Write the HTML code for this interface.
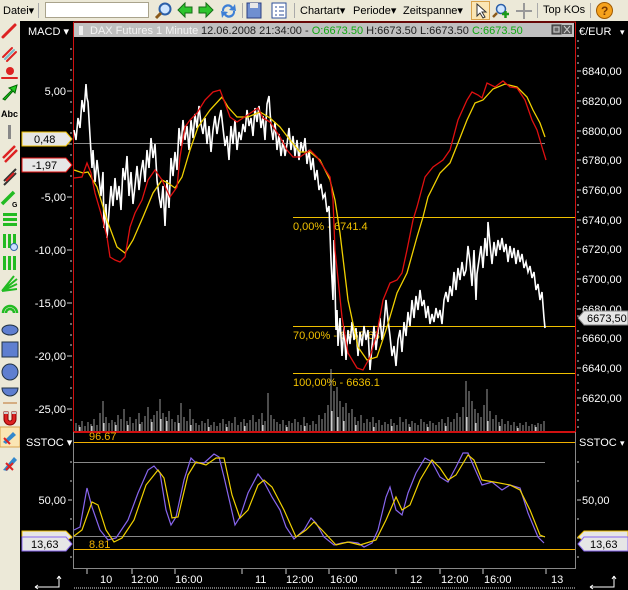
<!DOCTYPE html>
<html><head><meta charset="utf-8"><style>
*{margin:0;padding:0;box-sizing:border-box}
body{width:628px;height:590px;overflow:hidden;background:#000;font-family:"Liberation Sans",sans-serif;position:relative}
.tb{position:absolute;left:0;top:0;width:628px;height:21px;background:#ECE9D8;font-size:11px;color:#000}
.tb span{position:absolute;top:4px}
.lc{position:absolute;left:0;top:21px;width:20px;height:569px;background:#ECE9D8}
.w{position:absolute;color:#fff;font-size:11px;white-space:nowrap}
.r{text-align:right}
</style></head><body>
<div class="tb">
<span style="left:3px">Datei▾</span>
<div style="position:absolute;left:38px;top:3px;width:1px;height:15px;background:#aaa"></div>
<div style="position:absolute;left:45px;top:2px;width:104px;height:16px;background:#fff;border:1px solid #a9a38c"></div>
<svg style="position:absolute;left:153px;top:1px" width="20" height="19"><circle cx="12" cy="8" r="5.5" fill="#cfe6ff" stroke="#2b5fa8" stroke-width="2"/><line x1="8" y1="12" x2="3" y2="17" stroke="#8a5a1a" stroke-width="3"/></svg>
<svg style="position:absolute;left:177px;top:2px" width="65" height="18"><path d="M1 8 L8 1 L8 5 L15 5 L15 11 L8 11 L8 15Z" fill="#2ec52e" stroke="#176d17"/><path d="M36 8 L29 1 L29 5 L22 5 L22 11 L29 11 L29 15Z" fill="#2ec52e" stroke="#176d17"/><path d="M45 9 A6 6 0 0 1 56 5 L58 2 L59 9 L52 8 L54 6 A4 4 0 0 0 47 9Z" fill="#3d7fd6"/><path d="M58 9 A6 6 0 0 1 47 13 L45 16 L44 9 L51 10 L49 12 A4 4 0 0 0 56 9Z" fill="#3d7fd6"/></svg>
<div style="position:absolute;left:242px;top:3px;width:1px;height:15px;background:#aaa"></div>
<svg style="position:absolute;left:246px;top:2px" width="42" height="17"><rect x="1" y="1" width="14" height="15" fill="#6f8fd0" stroke="#2c3f80"/><rect x="4" y="1" width="8" height="5" fill="#e8e8e8"/><rect x="26" y="1" width="14" height="15" fill="#fff" stroke="#2c4f9a"/><path d="M29 5h2M33 5h5M29 9h2M33 9h5M29 13h2M33 13h5" stroke="#2c4f9a"/></svg>
<div style="position:absolute;left:294px;top:3px;width:1px;height:15px;background:#aaa"></div>
<span style="left:300px">Chartart▾</span><span style="left:353px">Periode▾</span><span style="left:403px">Zeitspanne▾</span>
<div style="position:absolute;left:471px;top:1px;width:19px;height:19px;background:#fbe6b4;border:1px solid #d9a34c"></div>
<svg style="position:absolute;left:473px;top:2px" width="60" height="18"><path d="M4 2 L4 14 L7 11 L10 16 L12 15 L9 10 L13 10Z" fill="#fff" stroke="#333"/><circle cx="28" cy="7" r="4.5" fill="#cfe6ff" stroke="#2b5fa8" stroke-width="1.5"/><path d="M24 11 L20 15" stroke="#8a5a1a" stroke-width="2.5"/><path d="M29 12h7M32.5 9v7" stroke="#1a9a1a" stroke-width="2.5"/><path d="M51 1v16M43 9h16" stroke="#999" stroke-width="2"/></svg>
<div style="position:absolute;left:537px;top:3px;width:1px;height:15px;background:#aaa"></div>
<span style="left:543px">Top KOs</span>
<div style="position:absolute;left:590px;top:3px;width:1px;height:15px;background:#aaa"></div>
<svg style="position:absolute;left:595px;top:1px" width="19" height="19"><circle cx="9.5" cy="9.5" r="8" fill="#f6a21c" stroke="#a05a00"/><text x="6" y="14" font-size="12" font-weight="bold" fill="#7a3a00" font-family="Liberation Sans">?</text></svg>
</div>
<div class="lc">
<svg width="20" height="569" style="position:absolute;left:0;top:0">
<g stroke-linecap="round">
<path d="M3 16 L15 4" stroke="#d22" stroke-width="3"/>
<path d="M3 36 L12 27M7 40 L16 31" stroke="#d22" stroke-width="2"/><path d="M5 38 L14 29" stroke="#7bc" stroke-width="2"/>
<circle cx="10" cy="50" r="4" fill="#d22"/><path d="M2 57h15" stroke="#d22" stroke-width="2"/>
<path d="M3 78 L12 69 L9 67 L17 64 L15 72 L13 70 L5 79Z" fill="#2c2" stroke="#060"/>
</g>
<text x="1" y="96" font-size="9" font-weight="bold" font-family="Liberation Sans" fill="#000">Abc</text>
<rect x="8" y="104" width="3" height="14" fill="#888"/>
<path d="M3 137 L15 125M5 141 L17 129" stroke="#d22" stroke-width="2.5"/>
<path d="M4 160 L16 148M4 164 L16 152" stroke="#333" stroke-width="2"/><path d="M6 160 L14 152" stroke="#d22" stroke-width="2"/>
<path d="M2 183 L14 171" stroke="#2b2" stroke-width="3.5"/><text x="12" y="186" font-size="7" font-weight="bold" fill="#000">G</text>
<g fill="#2b2"><rect x="3" y="192" width="14" height="3"/><rect x="3" y="197" width="14" height="3"/><rect x="3" y="202" width="14" height="3"/>
<rect x="3" y="213" width="3" height="14"/><rect x="8" y="213" width="3" height="14"/><rect x="13" y="213" width="3" height="12"/>
<rect x="3" y="235" width="3" height="14"/><rect x="8" y="235" width="3" height="14"/><rect x="13" y="235" width="3" height="14"/></g>
<circle cx="14" cy="226" r="3.5" fill="#cdf" stroke="#36a"/>
<path d="M2 270 L17 258M2 270 L17 263M2 270 L17 268M2 270 L14 255" stroke="#2b2" stroke-width="2"/>
<path d="M3 292 A7 7 0 0 1 17 292M6 292 A4 4 0 0 1 14 292" stroke="#2b2" stroke-width="2.5" fill="none"/>
<ellipse cx="10" cy="309" rx="8" ry="5" fill="#5f7fd0" stroke="#234"/>
<rect x="2" y="321" width="16" height="15" fill="#5f7fd0" stroke="#234"/>
<circle cx="10" cy="351" r="8" fill="#5f7fd0" stroke="#234"/>
<path d="M2 367 A8 8 0 0 0 18 367Z" fill="#5f7fd0" stroke="#234"/>
<path d="M3 382h14" stroke="#c96" stroke-width="1.5"/>
<path d="M4 391 v7 a6 6 0 0 0 12 0 v-7 h-4 v7 a2 2 0 0 1 -4 0 v-7z" fill="#d22" stroke="#800"/><rect x="4" y="391" width="4" height="2" fill="#ccc"/><rect x="12" y="391" width="4" height="2" fill="#ccc"/>
<rect x="0" y="406" width="20" height="20" fill="#fbe6b4" stroke="#d9a34c"/><path d="M3 421 L13 411 L16 414 L6 423Z" fill="#38c"/><path d="M4 417 L10 423" stroke="#d22" stroke-width="2"/>
<path d="M3 449 L14 436 L17 439 L7 450Z" fill="#38c"/><path d="M6 442 L13 449M13 442 L6 449" stroke="#d22" stroke-width="2"/>
</svg></div>

<svg width="628" height="590" style="position:absolute;left:0;top:0;pointer-events:none" font-family="Liberation Sans">
<!-- clip leftcol -->
<!-- header bar -->
<rect x="74" y="23" width="500" height="14" fill="#c0c0c0"/>
<rect x="79" y="26" width="4" height="9" fill="#eee"/>
<text x="90" y="34" font-size="11" fill="#f2f2f2">DAX Futures 1 Minute</text>
<text x="201" y="34" font-size="11" fill="#222">12.06.2008 21:34:00 - <tspan fill="#1a1">O:6673.50</tspan> H:6673.50 L:6673.50 <tspan fill="#1a1">C:6673.50</tspan></text>
<rect x="552" y="25" width="9" height="9" fill="#666" stroke="#333"/><rect x="554" y="27" width="5" height="5" fill="none" stroke="#ccc"/>
<rect x="562" y="25" width="10" height="9" fill="#555"/><path d="M564 26 L570 33M570 26 L564 33" stroke="#ccc"/>
<!-- pane borders -->
<path d="M73.5 22 V431.5 H575.5 V22 H73.5" fill="none" stroke="#d01010"/>
<path d="M73.5 432 V568.5 H575.5 V432" fill="none" stroke="#888"/>
<path d="M74 432.5 H575" stroke="#d01010"/>
<!-- left axis ticks main -->
<g stroke="#ccc">
<path d="M67 91h5M67 144h5M67 197h5M67 250h5M67 303h5M67 356h5M67 409h5"/>
<path d="M70 49h2M70 59h2M70 70h2M70 80h2M70 102h2M70 112h2M70 123h2M70 133h2M70 155h2M70 165h2M70 176h2M70 186h2M70 208h2M70 218h2M70 229h2M70 239h2M70 261h2M70 271h2M70 282h2M70 292h2M70 314h2M70 324h2M70 335h2M70 345h2M70 367h2M70 377h2M70 388h2M70 398h2M70 420h2"/>
</g>
<g fill="#fff" font-size="11" text-anchor="end">
<text x="66" y="95">5,00</text><text x="66" y="201">-5,00</text><text x="66" y="254">-10,00</text><text x="66" y="307">-15,00</text><text x="66" y="360">-20,00</text><text x="66" y="413">-25,00</text>
</g>
<!-- right axis -->
<g stroke="#ccc">
<path d="M577 71h4M577 101h4M577 131h4M577 160h4M577 190h4M577 220h4M577 249h4M577 279h4M577 309h4M577 338h4M577 368h4M577 398h4"/>
<path d="M577 41h2M577 48h2M577 56h2M577 63h2M577 78h2M577 86h2M577 93h2M577 108h2M577 116h2M577 123h2M577 138h2M577 145h2M577 153h2M577 168h2M577 175h2M577 183h2M577 197h2M577 205h2M577 212h2M577 227h2M577 234h2M577 242h2M577 257h2M577 264h2M577 272h2M577 286h2M577 294h2M577 301h2M577 316h2M577 331h2M577 346h2M577 353h2M577 361h2M577 375h2M577 383h2M577 390h2M577 405h2M577 413h2M577 420h2M577 427h2"/>
</g>
<g fill="#fff" font-size="11">
<text x="582" y="75">6840,00</text><text x="582" y="105">6820,00</text><text x="582" y="135">6800,00</text><text x="582" y="164">6780,00</text><text x="582" y="194">6760,00</text><text x="582" y="224">6740,00</text><text x="582" y="253">6720,00</text><text x="582" y="283">6700,00</text><text x="582" y="313">6680,00</text><text x="582" y="342">6660,00</text><text x="582" y="372">6640,00</text><text x="582" y="402">6620,00</text>
</g>
<text x="28" y="35" font-size="11" fill="#fff">MACD ▾</text>
<text x="579" y="35" font-size="11" fill="#fff">€/EUR</text><text x="620" y="35" font-size="9" fill="#fff">▾</text>
<!-- gray zero line -->
<path d="M74 143.5 H545" stroke="#888"/>
<!-- fib lines -->
<path d="M293 217.5 H575M293 326.5 H575M293 373.5 H575" stroke="#f0c000"/>
<g fill="#f0c000" font-size="11"><text x="293" y="230">0,00% - 6741.4</text><text x="293" y="339">70,00% - 6667.63</text><text x="293" y="386">100,00% - 6636.1</text></g>
<!-- volume -->
<path stroke="#999" stroke-width="1" d="M76 431v-8M79 431v-6M82 431v-10M85 431v-5M88 431v-9M91 431v-7M94 431v-12M97 431v-6M100 431v-18M103 431v-30M106 431v-14M109 431v-8M112 431v-11M115 431v-9M118 431v-16M121 431v-12M124 431v-22M127 431v-10M130 431v-14M133 431v-8M136 431v-12M139 431v-18M142 431v-9M145 431v-15M148 431v-24M151 431v-12M154 431v-16M157 431v-20M160 431v-32M163 431v-18M166 431v-14M169 431v-20M172 431v-12M175 431v-9M178 431v-16M181 431v-28M184 431v-14M187 431v-10M190 431v-22M193 431v-12M196 431v-8M199 431v-6M202 431v-10M205 431v-8M208 431v-12M211 431v-6M214 431v-9M217 431v-5M220 431v-8M223 431v-12M226 431v-7M229 431v-10M232 431v-8M235 431v-14M238 431v-6M241 431v-9M244 431v-12M247 431v-8M250 431v-11M253 431v-16M256 431v-9M259 431v-12M262 431v-18M265 431v-10M268 431v-38M271 431v-16M274 431v-12M277 431v-9M280 431v-7M283 431v-11M286 431v-6M289 431v-10M292 431v-8M295 431v-12M298 431v-9M301 431v-6M304 431v-14M307 431v-8M310 431v-6M313 431v-10M316 431v-7M319 431v-16M322 431v-12M325 431v-18M328 431v-26M331 431v-62M334 431v-40M337 431v-44M340 431v-30M343 431v-24M346 431v-28M349 431v-18M352 431v-22M355 431v-14M358 431v-10M361 431v-16M364 431v-8M367 431v-12M370 431v-9M373 431v-14M376 431v-8M379 431v-11M382 431v-6M385 431v-9M388 431v-7M391 431v-12M394 431v-8M397 431v-6M400 431v-14M403 431v-9M406 431v-12M409 431v-7M412 431v-10M415 431v-8M418 431v-6M421 431v-12M424 431v-9M427 431v-7M430 431v-10M433 431v-8M436 431v-6M439 431v-9M442 431v-12M445 431v-8M448 431v-14M451 431v-9M454 431v-12M457 431v-18M460 431v-14M463 431v-24M466 431v-50M469 431v-40M472 431v-30M475 431v-22M478 431v-18M481 431v-14M484 431v-26M487 431v-42M490 431v-20M493 431v-12M496 431v-16M499 431v-9M502 431v-12M505 431v-7M508 431v-10M511 431v-6M514 431v-9M517 431v-5M520 431v-8M523 431v-6M526 431v-9M529 431v-5M532 431v-7M535 431v-6M538 431v-8M541 431v-7M544 431v-10"/>
<path stroke="#fff" stroke-width="1" d="M80 431v-4M92 431v-5M104 431v-8M116 431v-6M128 431v-6M140 431v-7M152 431v-9M161 431v-12M167 431v-10M179 431v-8M191 431v-6M209 431v-4M227 431v-4M245 431v-5M263 431v-6M287 431v-4M305 431v-5M332 431v-20M338 431v-14M344 431v-10M356 431v-6M374 431v-4M392 431v-5M410 431v-4M428 431v-4M446 431v-5M467 431v-14M476 431v-8M488 431v-10M500 431v-5M518 431v-3M536 431v-4"/>
<!-- price -->
<polyline fill="none" stroke="#fff" stroke-width="1.6" points="74,130 76,140 78,118 80,128 82,100 84,112 86,84 87,98 88,102 90,136 92,168 93,150 95,182 97,160 99,178 101,196 103,172 104,228 106,204 107,238 109,212 111,186 113,206 115,178 117,200 119,186 121,210 123,168 125,180 127,156 129,196 131,172 133,204 135,186 137,166 139,190 141,172 143,160 145,182 147,150 149,168 151,138 153,158 155,144 157,180 159,196 161,208 163,186 165,226 167,180 169,208 171,158 173,176 175,152 177,170 179,128 181,146 183,120 185,140 187,126 189,150 191,120 193,138 195,114 197,128 199,106 201,124 203,134 205,118 207,144 209,126 211,152 213,130 215,116 217,134 219,120 221,110 223,128 225,146 227,136 229,160 231,126 233,144 235,120 237,150 239,132 241,140 243,124 245,132 247,110 249,126 251,118 253,136 255,108 257,122 259,106 261,128 263,116 265,140 267,104 269,96 271,126 273,140 275,122 277,150 279,134 281,156 283,140 285,156 287,144 289,128 291,150 293,136 295,156 297,140 299,160 301,142 303,152 305,138 307,164 309,150 311,170 313,158 315,180 317,170 319,190 321,184 323,198 325,194 327,212 329,206 331,260 333,300 334,240 336,330 337,310 338,346 340,318 342,356 344,326 346,360 348,330 350,344 352,322 354,340 356,328 358,356 360,332 362,346 364,326 366,340 368,330 370,370 372,346 374,326 376,350 378,332 380,318 382,340 384,324 386,300 388,320 390,336 392,356 394,346 396,366 398,340 400,330 402,352 404,322 406,336 408,312 410,326 412,300 414,318 416,296 418,310 420,290 422,306 424,300 426,318 428,306 430,324 432,314 434,322 436,308 438,318 440,310 442,324 444,300 446,292 448,302 450,286 452,296 454,272 456,290 458,268 460,280 462,262 464,276 466,270 468,246 470,262 472,286 474,250 476,300 477,274 479,260 481,246 483,268 485,238 487,256 488,222 490,244 492,264 494,242 496,256 498,240 500,250 502,238 504,252 506,244 508,262 510,246 512,258 514,248 516,264 518,250 520,262 522,254 524,268 526,262 528,272 530,266 532,278 534,272 536,290 538,284 540,300 542,292 544,318 545,328"/>
<!-- signal yellow -->
<polyline fill="none" stroke="#f0d000" stroke-width="1.3" points="74,170 83,173 88,172 97,187 107,220 117,247 125,253 133,240 143,217 153,193 162,180 168,183 175,188 182,177 190,150 198,127 210,110 222,97 228,107 237,117 248,117 260,112 270,118 280,127 290,140 300,152 310,152 320,160 330,180 335,200 340,233 348,300 358,347 367,360 377,357 387,327 397,293 407,273 417,237 423,217 428,197 440,173 450,163 458,143 467,120 475,103 483,100 493,89 505,84 517,87 527,97 533,110 540,123 545,137"/>
<!-- macd red -->
<polyline fill="none" stroke="#e01010" stroke-width="1.3" points="74,178 82,177 87,163 91,173 95,193 102,217 107,237 110,257 115,260 120,262 125,257 130,227 135,213 142,200 148,180 155,170 162,180 170,197 177,187 180,157 185,127 190,120 197,113 205,100 213,92 220,90 225,103 230,117 237,122 243,118 252,112 258,108 263,118 270,122 280,137 287,150 293,157 300,157 310,150 317,157 330,177 333,200 335,250 342,317 348,353 357,368 363,370 370,357 377,333 383,300 390,283 397,280 402,273 407,250 413,220 417,207 425,177 433,167 443,160 450,150 458,120 467,100 472,92 478,95 482,98 487,83 495,87 503,81 510,87 517,88 525,100 532,120 537,130 542,147 546,160"/>
<!-- MACD markers -->
<path d="M22 132 H66 L72 139 L66 146 H22Z" fill="#e6e6e6" stroke="#f0c000"/>
<text x="34" y="143" font-size="11" fill="#000">0,48</text>
<path d="M22 158 H66 L72 165 L66 172 H22Z" fill="#e6e6e6" stroke="#e01010"/>
<text x="32" y="169" font-size="11" fill="#000">-1,97</text>
<!-- price marker -->
<path d="M578 318 L584 311 H628 V325 H584Z" fill="#e6e6e6" stroke="#888"/>
<text x="587" y="322" font-size="11" fill="#000">6673,50</text>
<!-- stoch pane -->
<text x="26" y="446" font-size="11" fill="#fff">SSTOC ▾</text>
<text x="579" y="446" font-size="11" fill="#fff">SSTOC</text><text x="620" y="446" font-size="9" fill="#fff">▾</text>
<path d="M74 442.5 H575M74 549.5 H575" stroke="#f0b000"/>
<path d="M74 462.5 H545M74 536.5 H545" stroke="#888"/>
<text x="89" y="440" font-size="11" fill="#f0b000">96.67</text>
<text x="89" y="548" font-size="11" fill="#f0b000">8.81</text>
<g stroke="#ccc"><path d="M68 500h4M70 462h2M70 481h2M70 519h2M70 538h2M70 557h2M577 500h4M577 462h2M577 481h2M577 519h2M577 538h2M577 557h2"/></g>
<text x="66" y="504" font-size="11" fill="#fff" text-anchor="end">50,00</text>
<text x="582" y="504" font-size="11" fill="#fff">50,00</text>
<polyline fill="none" stroke="#8866ee" stroke-width="1.2" points="74,530 80,527 87,488 92,507 100,530 108,540 116,538 128,520 138,493 148,470 154,466 160,473 166,510 171,525 176,517 184,480 191,458 196,463 204,463 214,454 219,457 224,477 230,503 235,525 240,517 248,493 258,474 264,482 272,497 280,510 286,527 294,539 304,530 311,518 316,523 324,537 334,545 342,543 350,542 358,543 364,547 372,543 378,530 386,497 390,487 396,510 402,515 408,493 416,473 425,458 432,462 440,477 448,482 456,467 463,453 468,453 474,467 482,485 492,482 502,490 510,485 520,488 528,513 538,537 544,543"/>
<polyline fill="none" stroke="#f0d000" stroke-width="1.2" points="74,536 82,530 92,502 98,505 106,530 114,542 122,538 134,520 146,485 158,470 164,478 172,518 178,517 188,475 196,462 206,465 216,458 224,458 232,495 240,518 248,510 258,485 264,480 272,487 284,510 296,537 306,530 314,522 322,530 336,545 348,542 360,545 376,540 386,520 396,497 402,510 410,505 420,480 432,460 440,468 448,480 456,475 468,455 474,460 482,480 494,482 510,485 520,490 530,510 540,535 545,537"/>
<!-- stoch markers -->
<path d="M22 531 H66 L72 537 L66 541 H22Z" fill="#e6e6e6" stroke="#f0c000"/>
<path d="M22 537 H66 L72 544 L66 551 H22Z" fill="#e6e6e6" stroke="#8866ee"/>
<text x="31" y="548" font-size="11" fill="#000">13,63</text>
<path d="M578 537 L584 531 H628 V541 H584Z" fill="#e6e6e6" stroke="#f0c000"/>
<path d="M578 544 L584 537 H628 V551 H584Z" fill="#e6e6e6" stroke="#8866ee"/>
<text x="590" y="548" font-size="11" fill="#000">13,63</text>
<!-- x axis -->
<g stroke="#ccc"><path d="M87 569v5M132 569v5M175 569v5M242 569v5M286 569v5M329 569v5M396 569v5M440 569v5M483 569v5M546 569v5"/></g>
<g fill="#fff" font-size="11"><text x="100" y="583">10</text><text x="131" y="583">12:00</text><text x="175" y="583">16:00</text><text x="255" y="583">11</text><text x="286" y="583">12:00</text><text x="330" y="583">16:00</text><text x="410" y="583">12</text><text x="441" y="583">12:00</text><text x="484" y="583">16:00</text><text x="551" y="583">13</text></g>
<path d="M35 587 H59 V576M35 587 l3 -2M35 587 l3 2M59 576 l-2 3M59 576 l2 3" stroke="#fff" fill="none"/>
<path d="M590 587 H614 V576M590 587 l3 -2M590 587 l3 2M614 576 l-2 3M614 576 l2 3" stroke="#fff" fill="none"/>
<path d="M74 588 H575" stroke="#ddd" stroke-dasharray="1 1"/>
</svg>
</body></html>
